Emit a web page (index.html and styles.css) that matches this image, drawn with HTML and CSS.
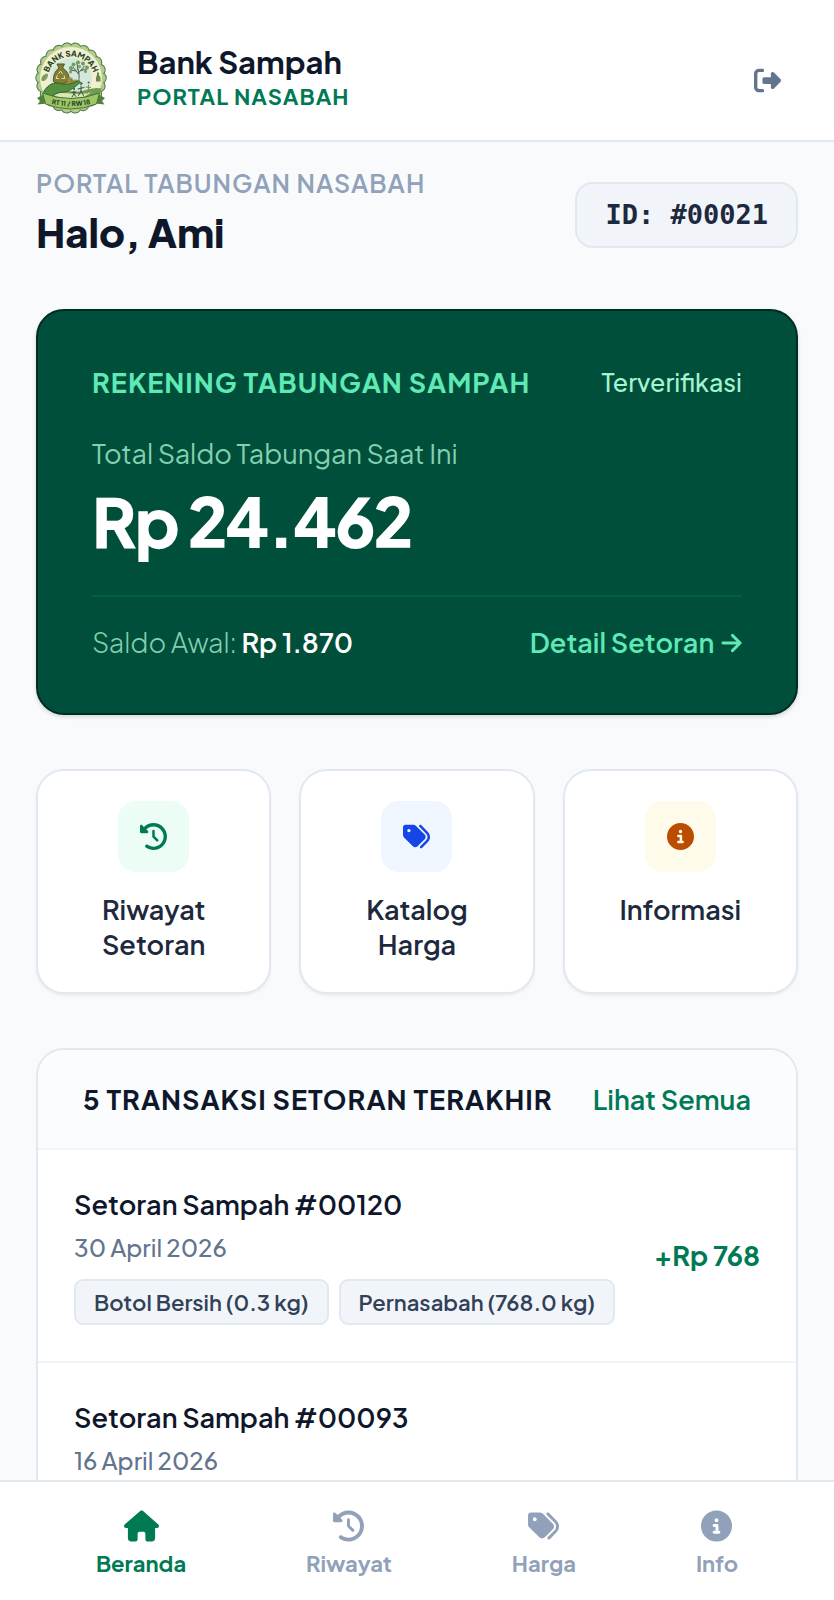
FILE: index.html
```html
<!DOCTYPE html>
<html lang="id">
<head>
    <meta charset="UTF-8">
    <meta name="viewport" content="width=device-width, initial-scale=1.0">
    <title>Bank Sampah - Portal Nasabah</title>
    <link rel="stylesheet" href="styles.css">
</head>
<body>

    <!-- Shared icons -->
    <svg class="sprite" aria-hidden="true">
        <symbol id="icon-history" viewBox="0 0 512 512">
            <path d="M75 75L41 41C25.900 25.900 0 36.600 0 57.900V168c0 13.300 10.700 24 24 24H134.100c21.400 0 32.100-25.900 17-41l-30.800-30.800C155 85.500 203 64 256 64c106 0 192 86 192 192s-86 192-192 192c-40.800 0-78.600-12.700-109.700-34.400c-14.500-10.100-34.400-6.600-44.600 7.900s-6.600 34.400 7.900 44.600C151.200 495 201.700 512 256 512c141.400 0 256-114.600 256-256S397.400 0 256 0C185.300 0 121.300 28.700 75 75zm181 53c-13.300 0-24 10.700-24 24V256c0 6.400 2.500 12.500 7 17l72 72c9.400 9.400 24.600 9.400 33.900 0s9.400-24.600 0-33.900l-65-65V152c0-13.300-10.700-24-24-24z"/>
        </symbol>
        <symbol id="icon-tags" viewBox="0 0 512 512">
            <path d="M345 39.100L472.800 168.400c52.400 53 52.400 138.200 0 191.200L360.800 472.900c-9.300 9.400-24.500 9.500-33.900 .2s-9.500-24.500-.2-33.900L438.600 325.900c33.900-34.300 33.900-89.400 0-123.700L310.900 72.900c-9.300-9.400-9.200-24.600 .2-33.900s24.600-9.200 33.900 .2zM0 229.500V80C0 53.500 21.500 32 48 32H197.500c17 0 33.300 6.700 45.300 18.700l168 168c25 25 25 65.500 0 90.500L277.300 442.700c-25 25-65.500 25-90.500 0l-168-168C6.700 262.700 0 246.500 0 229.500zM144 144a32 32 0 1 0-64 0 32 32 0 1 0 64 0z"/>
        </symbol>
        <symbol id="icon-info" viewBox="0 0 512 512">
            <path d="M256 512A256 256 0 1 0 256 0a256 256 0 1 0 0 512zM216 336h24V272H216c-13.300 0-24-10.700-24-24s10.700-24 24-24h48c13.300 0 24 10.700 24 24v88h8c13.300 0 24 10.700 24 24s-10.700 24-24 24H216c-13.300 0-24-10.700-24-24s10.700-24 24-24zm40-208a32 32 0 1 1 0 64 32 32 0 1 1 0-64z"/>
        </symbol>
        <symbol id="icon-home" viewBox="0 0 576 512">
            <path d="M575.800 255.500c0 18-15 32.100-32 32.100h-32l.7 160.200c0 35.300-20 64.200-56 64.200H392c-22 0-40-18-40-40V384c0-17.700-14.300-32-32-32H256c-17.700 0-32 14.300-32 32v88c0 22-18 40-40 40H120c-36 0-56-28-56-56V287.600H32c-18 0-32-14-32-32.100c0-9 3-17 10-24L266.400 8c7-7 15-8 22-8s15 2 21 7L564.800 231.500c8 7 12 15 11 24z"/>
        </symbol>
        <symbol id="icon-logout" viewBox="0 0 512 512">
            <path d="M377.900 105.900L500.700 228.700c7.200 7.200 11.300 17.100 11.300 27.300s-4.100 20.100-11.300 27.300L377.900 406.100c-6.400 6.400-15 9.900-24 9.900c-18.700 0-33.900-15.200-33.900-33.900V320H192c-17.700 0-32-14.300-32-32V224c0-17.700 14.300-32 32-32H320V129.900c0-18.700 15.200-33.900 33.900-33.900c9 0 17.600 3.600 24 9.900zM160 96H96c-17.700 0-32 14.300-32 32V384c0 17.700 14.300 32 32 32h64c17.700 0 32 14.300 32 32s-14.300 32-32 32H96c-53 0-96-43-96-96V128C0 75 43 32 96 32h64c17.700 0 32 14.300 32 32s-14.300 32-32 32z"/>
        </symbol>
    </svg>

    <!-- Header -->
    <header class="header">
        <svg class="logo" viewBox="0 0 144 144" role="img" aria-label="Logo Bank Sampah">
            <!-- Scalloped edge -->
            <circle cx="72" cy="72" r="59" fill="none" stroke="#4d7a45" stroke-width="25" stroke-linecap="round" stroke-dasharray="0.100 16.750"/>
            <circle cx="72" cy="72" r="59" fill="none" stroke="#b5cb8c" stroke-width="21" stroke-linecap="round" stroke-dasharray="0.100 16.750"/>
            <circle cx="72" cy="72" r="62" fill="#f0efcf"/>
            <circle cx="72" cy="74" r="42" fill="#d3e7da"/>
            <!-- Tree -->
            <path d="M86 82c4-10 2-18 0-28M87 64l-10-13M87 62l12-14M86 56l-2-14M92 57l11-2M82 58l-12-2" fill="none" stroke="#536052" stroke-width="2" stroke-linecap="round"/>
            <g fill="#719d62">
                <circle cx="72" cy="52" r="4"/><circle cx="77" cy="45" r="4"/><circle cx="86" cy="41" r="4"/>
                <circle cx="96" cy="43" r="4"/><circle cx="104" cy="51" r="4"/><circle cx="101" cy="59" r="3"/>
                <circle cx="71" cy="60" r="3"/><circle cx="89" cy="49" r="3"/><circle cx="79" cy="54" r="2"/><circle cx="96" cy="54" r="2"/>
            </g>
            <!-- Hill -->
            <path d="M30 104c22-12 45-3 60-5 16-3 26-10 44-6-8 24-30 40-62 40-20 0-34-12-42-29z" fill="#6e9d4f"/>
            <path d="M32 103c28-5 55 7 82-4-16 16-54 22-82 4z" fill="#dce5b5"/>
            <!-- Money bag and coins -->
            <path d="M44 44h15l-4 8c10 6 15 16 13 27-8 6-24 6-31 0-1-11 3-21 11-27z" fill="#827d35" stroke="#4b5727" stroke-width="2"/>
            <path d="M47 64l4-6 4 6M58 67l2 6h-7M48 73h-6l3-7" fill="none" stroke="#e6dc9b" stroke-width="2"/>
            <g fill="#b79f48" stroke="#6f6c2c" stroke-width="1">
                <rect x="64" y="72" width="10" height="4"/><rect x="64" y="76" width="10" height="4"/><rect x="64" y="80" width="10" height="4"/>
                <rect x="74" y="76" width="10" height="4"/><rect x="74" y="80" width="10" height="4"/>
            </g>
            <!-- Hand -->
            <path d="M17 100c10-17 22-20 34-17 12 4 23 1 34-5 6-2 6 3 2 6-10 8-17 15-31 16-12 1-20 6-27 13z" fill="#55903f" stroke="#2e6535" stroke-width="2"/>
            <!-- Family -->
            <g fill="none" stroke="#34563a" stroke-width="2" stroke-linecap="round">
                <circle cx="78" cy="94" r="1"/><path d="M78 98v6l-4 6M78 104l4 5M74 101l8-1"/>
                <circle cx="92" cy="83" r="2"/><path d="M92 88v10l-5 9M92 98l5 9M86 94l12-3"/>
                <circle cx="107" cy="81" r="1"/><path d="M107 86v9l-3 8M107 95l4 7M102 90l9 1" stroke="#7b8c55"/>
            </g>
            <!-- Leaf and bottle -->
            <path d="M14 77c-1-8 3-12 11-13 0 9-4 14-11 13zM15 76l7-9" fill="#87aa61" stroke="#467039" stroke-width="1"/>
            <path d="M124 61h4v5l3 5v8h-9v-8l2-5z" fill="#638b4c"/>
            <!-- Ribbon -->
            <path d="M4 112l16-9 4 20-19 2 5-7zM140 112l-16-9-4 20 19 2-5-7z" fill="#52813d"/>
            <path d="M15 102q57 22 114 0l-6 22q-51 20-102 0z" fill="#9fc565" stroke="#477438" stroke-width="2"/>
            <path id="logo-arc" d="M25 76A47 47 0 0 1 119 76" fill="none"/>
            <path id="logo-ribbon" d="M20 121q52 14 104 0" fill="none"/>
            <text class="logo-name"><textPath href="#logo-arc" startOffset="50%">BANK SAMPAH</textPath></text>
            <text class="logo-area"><textPath href="#logo-ribbon" startOffset="50%">RT 11 / RW 18</textPath></text>
        </svg>
        <div class="brand">
            <h1>Bank Sampah</h1>
            <p>PORTAL NASABAH</p>
        </div>
        <button class="logout" type="button" aria-label="Keluar">
            <svg class="icon"><use href="#icon-logout"/></svg>
        </button>
    </header>

    <main class="content">
        <!-- Greeting -->
        <section class="greeting">
            <div>
                <p class="greeting-label">PORTAL TABUNGAN NASABAH</p>
                <h2>Halo, Ami</h2>
            </div>
            <span class="member-id">ID: #00021</span>
        </section>

        <!-- Balance Card -->
        <section class="balance">
            <div class="balance-row">
                <h3>REKENING TABUNGAN SAMPAH</h3>
                <span class="verified">Terverifikasi</span>
            </div>
            <p class="balance-label">Total Saldo Tabungan Saat Ini</p>
            <p class="balance-amount">Rp 24.462</p>
            <div class="balance-row balance-footer">
                <p>Saldo Awal: <strong>Rp 1.870</strong></p>
                <a href="#riwayat">Detail Setoran
                    <svg class="arrow" viewBox="0 0 22 20"><path d="M2 10h18M12 2l8 8-8 8"/></svg>
                </a>
            </div>
        </section>

        <!-- Shortcuts -->
        <section class="shortcuts">
            <a class="shortcut" href="#riwayat">
                <span class="shortcut-icon green"><svg class="icon"><use href="#icon-history"/></svg></span>
                <span>Riwayat<br>Setoran</span>
            </a>
            <a class="shortcut" href="#harga">
                <span class="shortcut-icon blue"><svg class="icon"><use href="#icon-tags"/></svg></span>
                <span>Katalog<br>Harga</span>
            </a>
            <a class="shortcut" href="#info">
                <span class="shortcut-icon amber"><svg class="icon"><use href="#icon-info"/></svg></span>
                <span>Informasi</span>
            </a>
        </section>

        <!-- Latest Transactions -->
        <section class="transactions" id="riwayat">
            <div class="transactions-header">
                <h3>5 TRANSAKSI SETORAN TERAKHIR</h3>
                <a href="#riwayat">Lihat Semua</a>
            </div>
            <article class="transaction">
                <div>
                    <h4>Setoran Sampah #00120</h4>
                    <p class="date">30 April 2026</p>
                    <div class="chips">
                        <span class="chip">Botol Bersih (0.3 kg)</span>
                        <span class="chip">Pernasabah (768.0 kg)</span>
                    </div>
                </div>
                <strong class="amount">+Rp 768</strong>
            </article>
            <article class="transaction">
                <div>
                    <h4>Setoran Sampah #00093</h4>
                    <p class="date">16 April 2026</p>
                </div>
            </article>
        </section>
    </main>

    <!-- Bottom Navigation -->
    <nav class="bottom-nav">
        <a class="active" href="#beranda"><svg class="icon home"><use href="#icon-home"/></svg>Beranda</a>
        <a href="#riwayat"><svg class="icon"><use href="#icon-history"/></svg>Riwayat</a>
        <a href="#harga"><svg class="icon"><use href="#icon-tags"/></svg>Harga</a>
        <a href="#info"><svg class="icon"><use href="#icon-info"/></svg>Info</a>
    </nav>

</body>
</html>
```
FILE: styles.css
```css
* {
    box-sizing: border-box;
    margin: 0;
    padding: 0;
}

body {
    display: flex;
    flex-direction: column;
    height: 100vh;
    font-family: "Plus Jakarta Sans", Inter, sans-serif;
    font-size: 27px;
    line-height: 36px;
    background-color: #f8fafc;
    color: #0f172b;
}

a {
    color: inherit;
    text-decoration: none;
}

.sprite {
    position: absolute;
    width: 0;
    height: 0;
}

.icon {
    display: block;
    width: 27px;
    height: 27px;
    fill: currentColor;
}

/* Header */
.header {
    display: flex;
    align-items: flex-end;
    padding: 42px 35px 26px;
    background-color: #fff;
    border-bottom: 2px solid #e2e8f0;
}

.logo {
    width: 72px;
    height: 72px;
    margin-right: 30px;
}

.logo text {
    font-weight: 800;
    text-anchor: middle;
    fill: #28482b;
}

.logo-name {
    font-size: 16px;
}

.logo-area {
    font-size: 13px;
}

.brand {
    flex: 1;
    padding-bottom: 2px;
}

.brand h1 {
    font-size: 31px;
    font-weight: 700;
    line-height: 36px;
}

.brand p {
    font-size: 22px;
    font-weight: 700;
    line-height: 32px;
    letter-spacing: 1px;
    color: #007a55;
}

.logout {
    padding: 20px 18px;
    border: none;
    background: none;
    color: #62748e;
    cursor: pointer;
}

/* Main Content */
.content {
    flex: 1;
    min-height: 0;
    padding: 24px 36px;
    overflow-y: auto;
    scrollbar-width: none;
}

.greeting {
    display: flex;
    justify-content: space-between;
    align-items: center;
    margin-bottom: 45px;
}

.greeting-label {
    font-size: 25px;
    font-weight: 600;
    line-height: 34px;
    letter-spacing: 1px;
    color: #90a1b9;
}

.greeting h2 {
    font-size: 40px;
    font-weight: 800;
    line-height: 64px;
}

.member-id {
    padding: 13px 28px;
    font-family: "DejaVu Sans Mono", monospace;
    font-size: 27px;
    font-weight: 700;
    color: #1d293d;
    background-color: #f1f5f9;
    border: 2px solid #e2e8f0;
    border-radius: 18px;
}

/* Balance Card */
.balance {
    margin-bottom: 54px;
    padding: 53px 54px;
    color: #fff;
    background-color: #004f3b;
    border: 2px solid #002c22;
    border-radius: 28px;
    box-shadow: 0 2px 4px rgba(0, 0, 0, 0.15);
}

.balance-row {
    display: flex;
    justify-content: space-between;
    align-items: center;
}

.balance h3 {
    font-size: 27px;
    font-weight: 700;
    letter-spacing: 1px;
    color: #5ee9b5;
}

.verified {
    font-size: 25px;
    font-weight: 500;
    color: #a4f4cf;
}

.balance-label {
    margin-top: 35px;
    color: #83d0b1;
}

.balance-amount {
    margin: 14px 0 38px;
    font-size: 67px;
    font-weight: 800;
    line-height: 72px;
    letter-spacing: -2px;
}

.balance-footer {
    padding-top: 27px;
    font-weight: 300;
    color: #83d0b1;
    border-top: 2px solid #006045;
}

.balance-footer strong {
    font-weight: 600;
    color: #fff;
}

.balance-footer a {
    font-weight: 600;
    color: #5ee9b5;
}

.arrow {
    width: 21px;
    height: 20px;
    margin-left: 2px;
    fill: none;
    stroke: currentColor;
    stroke-width: 3;
    stroke-linecap: round;
    stroke-linejoin: round;
}

/* Shortcuts */
.shortcuts {
    display: grid;
    grid-template-columns: repeat(3, 1fr);
    gap: 28px;
    margin-bottom: 54px;
}

.shortcut {
    display: flex;
    flex-direction: column;
    align-items: center;
    gap: 20px;
    padding: 30px 18px;
    font-weight: 600;
    line-height: 35px;
    text-align: center;
    color: #1d293d;
    background-color: #fff;
    border: 2px solid #e2e8f0;
    border-radius: 28px;
    box-shadow: 0 2px 3px rgba(0, 0, 0, 0.05);
}

.shortcut-icon {
    padding: 22px;
    border-radius: 18px;
}

.green {
    color: #007a55;
    background-color: #ecfdf5;
}

.blue {
    color: #1447e6;
    background-color: #eff6ff;
}

.amber {
    color: #bb4d00;
    background-color: #fffbeb;
}

/* Transactions */
.transactions {
    background-color: #fff;
    border: 2px solid #e2e8f0;
    border-radius: 28px;
    overflow: hidden;
}

.transactions-header {
    display: flex;
    justify-content: space-between;
    padding: 31px 45px;
    background-color: #fbfcfe;
    border-bottom: 2px solid #f1f5f9;
}

.transactions-header h3 {
    font-size: 27px;
    font-weight: 700;
    letter-spacing: 1px;
}

.transactions-header a {
    font-weight: 600;
    color: #007a55;
}

.transaction {
    display: flex;
    justify-content: space-between;
    align-items: center;
    padding: 35px 36px 36px;
    border-bottom: 2px solid #f1f5f9;
}

.transaction h4 {
    font-size: 27px;
    font-weight: 600;
    line-height: 38px;
}

.date {
    margin-top: 6px;
    font-size: 24px;
    font-weight: 500;
    color: #62748e;
}

.chips {
    display: flex;
    gap: 10px;
    margin-top: 14px;
}

.chip {
    padding: 6px 18px;
    font-size: 22px;
    font-weight: 600;
    line-height: 30px;
    color: #314158;
    background-color: #f1f5f9;
    border: 2px solid #e2e8f0;
    border-radius: 9px;
}

.amount {
    font-weight: 700;
    color: #007a55;
}

/* Bottom Navigation */
.bottom-nav {
    display: flex;
    justify-content: space-around;
    padding: 28px 36px 22px;
    background-color: #fff;
    border-top: 2px solid #e2e8f0;
}

.bottom-nav a {
    display: flex;
    flex-direction: column;
    align-items: center;
    gap: 6px;
    font-size: 22px;
    font-weight: 700;
    line-height: 30px;
    color: #90a1b9;
}

.bottom-nav a.active {
    color: #007a55;
}

.bottom-nav .icon {
    width: 31px;
    height: 32px;
}

.bottom-nav .home {
    width: 35px;
}
```
